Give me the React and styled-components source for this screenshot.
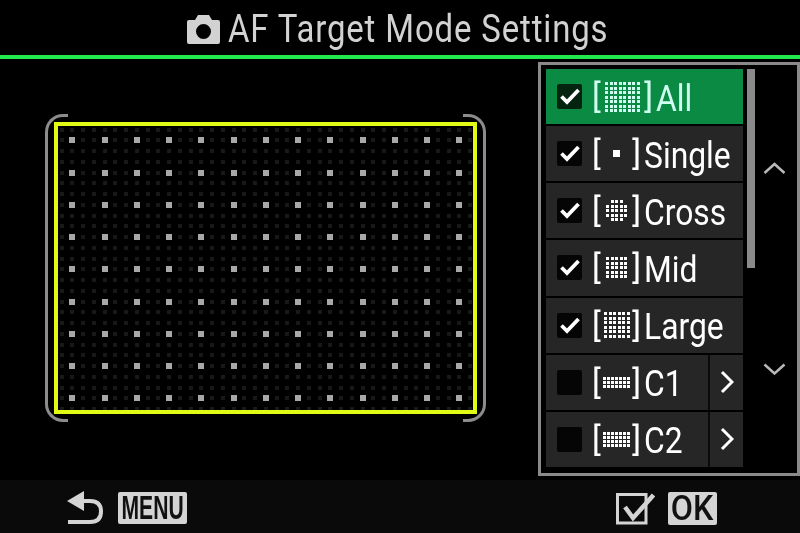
import React from "react";
import styled, { createGlobalStyle } from "styled-components";

const MODES = [
  { id: "all", label: "All", cols: 8, rows: 7, pitch: 4.5, wide: true, checked: true, active: true },
  { id: "single", label: "Single", cols: 1, rows: 1, checked: true },
  { id: "cross", label: "Cross", cols: 5, rows: 5, pitch: 4.5, noCorners: true, checked: true },
  { id: "mid", label: "Mid", cols: 5, rows: 5, pitch: 4.5, checked: true },
  { id: "large", label: "Large", cols: 6, rows: 6, pitch: 4.5, checked: true },
  { id: "c1", label: "C1", cols: 7, rows: 3, pitch: 4, more: true },
  { id: "c2", label: "C2", cols: 7, rows: 4, pitch: 4, more: true },
];

const DOT_STEP = 10.75;
const DOT_COUNT_X = 39;
const DOT_COUNT_Y = 27;

function AfDots() {
  const dots = [];
  for (let row = 0; row < DOT_COUNT_Y; row++) {
    for (let col = 0; col < DOT_COUNT_X; col++) {
      const bright = (col - 1) % 3 === 0 && (row - 1) % 3 === 0;
      const size = bright ? 6 : 4;
      dots.push(
        <rect
          key={`${row}-${col}`}
          x={Math.round(3.5 + col * DOT_STEP - size / 2)}
          y={Math.round(3.5 + row * DOT_STEP - size / 2)}
          width={size}
          height={size}
          fill={bright ? "#a8a8a8" : "#181818"}
        />
      );
    }
  }
  return (
    <svg width="416" height="286" viewBox="0 0 416 286">
      {dots}
    </svg>
  );
}

function GridIcon({ cols, rows, pitch = 4, noCorners }) {
  const single = cols === 1;
  const size = single ? 7 : 3;
  const w = single ? 7 : Math.round((cols - 1) * pitch) + size;
  const h = single ? 7 : Math.round((rows - 1) * pitch) + size;
  const cells = [];
  for (let r = 0; r < rows; r++) {
    for (let c = 0; c < cols; c++) {
      const corner = (r === 0 || r === rows - 1) && (c === 0 || c === cols - 1);
      if (noCorners && corner) continue;
      cells.push(
        <rect
          key={`${r}-${c}`}
          x={Math.round(c * pitch)}
          y={Math.round(r * pitch)}
          width={size}
          height={size}
          fill="currentColor"
        />
      );
    }
  }
  return (
    <svg width={w} height={h} viewBox={`0 0 ${w} ${h}`}>
      {cells}
    </svg>
  );
}

function CameraIcon() {
  return (
    <svg width="33" height="30" viewBox="0 0 33 30">
      <path
        fill="#d2d2d2"
        fillRule="evenodd"
        d="M11 1h11l3 5h6q2 0 2 2v20q0 2-2 2H2q-2 0-2-2V8q0-2 2-2h6zM16.500 10a7.500 7.500 0 1 0 0 15a7.500 7.500 0 1 0 0-15z"
      />
    </svg>
  );
}

function BackIcon() {
  return (
    <svg width="37" height="35" viewBox="0 0 37 35">
      <path fill="#d4d4d4" d="M0 10L17 0L17 20Z" />
      <path fill="none" stroke="#d4d4d4" strokeWidth="4" d="M14 10H23Q34 10 34 20.500Q34 31 23 31H1" />
    </svg>
  );
}

function Chevron({ dir }) {
  const d = {
    up: "M1.500 11L11.500 2L21.500 11",
    down: "M1.500 1.500L11.500 10.500L21.500 1.500",
  }[dir];
  return (
    <svg width="23" height="12" viewBox="0 0 23 12">
      <path d={d} fill="none" stroke="#b8b8b8" strokeWidth="2.500" />
    </svg>
  );
}

function CheckMark() {
  return (
    <svg width="20" height="17" viewBox="0 0 20 17">
      <path d="M1.500 8.500L7 14L18.500 2" fill="none" stroke="#fff" strokeWidth="3.800" />
    </svg>
  );
}

function App() {
  return (
    <>
      <GlobalStyle />
      <Screen>
        <Header>
          <CameraIcon />
          <Title>AF Target Mode Settings</Title>
        </Header>
        <Main>
          <AfArea>
            <AfFrameOuter>
              <AfFrame>
                <AfDots />
              </AfFrame>
            </AfFrameOuter>
          </AfArea>
          <Panel>
            <ModeList>
              {MODES.map((mode) => (
                <ModeRow key={mode.id} $active={mode.active}>
                  <CheckBox $active={mode.active}>{mode.checked && <CheckMark />}</CheckBox>
                  <Brackets $wide={mode.wide}>
                    <span>[</span>
                    <GridIcon {...mode} />
                    <span>]</span>
                  </Brackets>
                  <Label>{mode.label}</Label>
                  {mode.more && (
                    <MoreCell>
                      <svg width="14" height="24" viewBox="0 0 14 24">
                        <path d="M2 2L12 12L2 22" fill="none" stroke="#fff" strokeWidth="3" />
                      </svg>
                    </MoreCell>
                  )}
                </ModeRow>
              ))}
            </ModeList>
            <ScrollTrack>
              <ScrollThumb />
            </ScrollTrack>
            <ArrowColumn>
              <Chevron dir="up" />
              <Chevron dir="down" />
            </ArrowColumn>
          </Panel>
        </Main>
        <Footer>
          <FooterGroup>
            <BackIcon />
            <MenuBadge>
              <span>MENU</span>
            </MenuBadge>
          </FooterGroup>
          <FooterGroup>
            <svg width="40" height="33" viewBox="0 0 40 33">
              <path d="M2.500 2.500H31V31H2.500Z" fill="none" stroke="#d4d4d4" strokeWidth="3" />
              <path d="M10 15L18 26L38.500 3" fill="none" stroke="#d4d4d4" strokeWidth="4.500" />
            </svg>
            <OkBadge>
              <span>OK</span>
            </OkBadge>
          </FooterGroup>
        </Footer>
      </Screen>
    </>
  );
}

const GlobalStyle = createGlobalStyle`
  html, body {
    margin: 0;
    padding: 0;
    background: #000;
  }
`;

const Screen = styled.div`
  width: 800px;
  height: 533px;
  background: #000;
  display: flex;
  flex-direction: column;
  overflow: hidden;
  font-family: Roboto, "Liberation Sans", sans-serif;
  filter: blur(0.3px);
`;

const Header = styled.header`
  height: 55px;
  box-sizing: content-box;
  border-bottom: 4px solid #20e84e;
  display: flex;
  align-items: flex-start;
  padding: 0 0 0 187px;
  gap: 8px;

  > svg {
    margin-top: 14px;
  }
`;

const Title = styled.h1`
  margin: 0;
  font-size: 39px;
  line-height: 58px;
  font-weight: 400;
  color: #d2d2d2;
  white-space: nowrap;
  letter-spacing: 1px;
  display: inline-block;
  transform: scaleX(0.845);
  transform-origin: left center;
`;

const Main = styled.main`
  flex: 1;
  display: flex;
  padding-top: 3px;
  min-height: 0;
`;

const AfArea = styled.section`
  width: 538px;
  padding: 52px 0 0 45px;
  box-sizing: border-box;
`;

const AfFrameOuter = styled.div`
  position: relative;
  width: 441px;
  height: 308px;
  padding: 8px 9px;
  box-sizing: border-box;

  &::before,
  &::after {
    content: "";
    position: absolute;
    top: 0;
    bottom: 0;
    width: 20px;
    border: 3px solid #8c8c8c;
  }
  &::before {
    left: 0;
    border-right: none;
    border-radius: 18px 0 0 18px;
  }
  &::after {
    right: 0;
    border-left: none;
    border-radius: 0 18px 18px 0;
  }
`;

const AfFrame = styled.div`
  width: 423px;
  height: 292px;
  box-sizing: border-box;
  border: 4px solid #e2fb14;
  overflow: hidden;
  position: relative;
  z-index: 1;
  background: #000;

  svg {
    display: block;
  }
`;

const Panel = styled.aside`
  width: 262px;
  height: 414px;
  box-sizing: border-box;
  border: 3px solid #8a8a8a;
  padding: 4px 0 6px 5px;
  display: flex;
`;

const ModeList = styled.ul`
  list-style: none;
  margin: 0;
  padding: 0;
  width: 197px;
  display: grid;
  grid-template-rows: repeat(7, 1fr);
  gap: 2px;
`;

const ModeRow = styled.li`
  display: flex;
  align-items: center;
  background: ${(p) => (p.$active ? "#0b8a43" : "#262626")};
  color: ${(p) => (p.$active ? "#cffff0" : "#fff")};
  padding-left: 11px;
  overflow: hidden;
  min-width: 0;
`;

const CheckBox = styled.span`
  width: 25px;
  height: 25px;
  flex: none;
  border-radius: 2px;
  background: ${(p) => (p.$active ? "#04240f" : "#050505")};
  display: flex;
  align-items: center;
  justify-content: center;
`;

const Brackets = styled.span`
  width: ${(p) => (p.$wide ? 61 : 49)}px;
  margin-left: 10px;
  flex: none;
  display: flex;
  align-items: center;
  justify-content: space-between;
  font-size: 33px;
  font-weight: 400;
  line-height: 1;
`;

const Label = styled.span`
  margin-left: 3px;
  margin-top: 3px;
  font-size: 37px;
  line-height: 1;
  white-space: nowrap;
  display: inline-block;
  transform: scaleX(0.86);
  transform-origin: left center;
`;

const MoreCell = styled.span`
  margin-left: auto;
  width: 35px;
  height: 100%;
  flex: none;
  border-left: 2px solid #0a0a0a;
  background: #262626;
  box-sizing: border-box;
  display: flex;
  align-items: center;
  justify-content: center;
`;

const ScrollTrack = styled.div`
  width: 8px;
  margin-left: 4px;
`;

const ScrollThumb = styled.div`
  height: 199px;
  background: #8a8a8a;
`;

const ArrowColumn = styled.div`
  flex: 1;
  display: flex;
  flex-direction: column;
  align-items: center;
  gap: 189px;
  padding: 93px 4px 0 0;
`;

const Footer = styled.footer`
  height: 53px;
  flex: none;
  margin-top: 4px;
  box-sizing: border-box;
  background: #0a0a0a;
  display: flex;
  justify-content: space-between;
  align-items: center;
  padding: 3px 83px 0 67px;
`;

const FooterGroup = styled.div`
  display: flex;
  align-items: center;
  gap: 14px;

  &:last-child {
    gap: 13px;
  }
`;

const MenuBadge = styled.div`
  width: 69px;
  height: 32px;
  background: #d4d4d4;
  border-radius: 2px;
  color: #111;
  display: flex;
  align-items: center;
  justify-content: center;
  font-family: "Liberation Sans", Arial, sans-serif;
  font-size: 33px;
  font-weight: 700;

  > span {
    display: inline-block;
    transform: scaleX(0.64);
  }
`;

const OkBadge = styled.div`
  width: 49px;
  height: 33px;
  background: #d4d4d4;
  border-radius: 2px;
  color: #111;
  display: flex;
  align-items: center;
  justify-content: center;
  font-size: 35px;
  font-weight: 500;

  > span {
    display: inline-block;
    transform: scaleX(0.92);
  }
`;

export default App;
